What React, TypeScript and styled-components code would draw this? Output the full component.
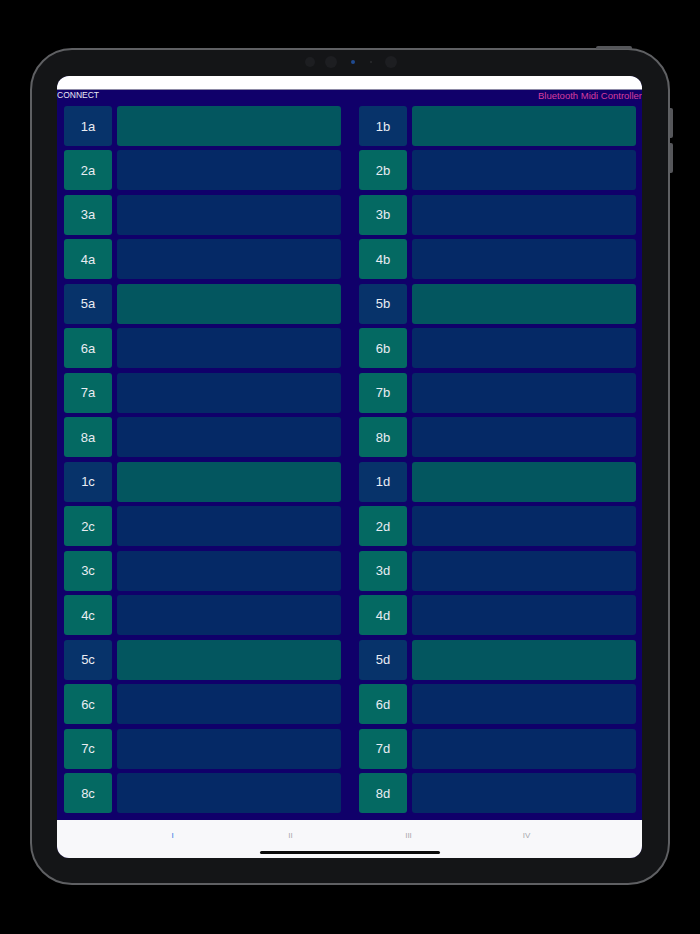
import styled, { createGlobalStyle } from "styled-components";

// pad rows: 1a..8a / 1b..8b, then 1c..8c / 1d..8d
const GROUPS = [
  ["a", "b"],
  ["c", "d"],
];
const TABS = ["I", "II", "III", "IV"];

const GlobalStyle = createGlobalStyle`
  html, body {
    margin: 0;
    padding: 0;
    background: #000;
  }
  body {
    font-family: "Liberation Sans", Arial, sans-serif;
  }
`;

const Page = styled.div`
  width: 700px;
  height: 934px;
  padding: 48px 0 0 30px;
  box-sizing: border-box;
  background: #000;
`;

const Device = styled.div`
  position: relative;
  width: 640px;
  height: 837px;
  box-sizing: border-box;
  padding: 26px 26px 25px 25px;
  border: 2px solid #5f6063;
  border-radius: 42px;
  background: #141517;
`;

const TopButton = styled.div`
  position: absolute;
  top: -4px;
  right: 36px;
  width: 36px;
  height: 3px;
  border-radius: 2px 2px 0 0;
  background: #55565a;
`;

const SideButton = styled.div<{ $top: number; $h: number }>`
  position: absolute;
  right: -5px;
  top: ${({ $top }) => $top}px;
  width: 3px;
  height: ${({ $h }) => $h}px;
  border-radius: 0 2px 2px 0;
  background: #55565a;
`;

const Cameras = styled.div`
  position: absolute;
  top: 6px;
  left: 273px;
  display: flex;
  align-items: center;
  height: 12px;
`;

const Lens = styled.div<{ $size: number; $gap: number; $color?: string }>`
  width: ${({ $size }) => $size}px;
  height: ${({ $size }) => $size}px;
  margin-left: ${({ $gap }) => $gap}px;
  border-radius: 50%;
  background: ${({ $color }) => $color || "#1d1e21"};
`;

const Screen = styled.div`
  width: 100%;
  height: 100%;
  display: flex;
  flex-direction: column;
  border-radius: 12px;
  overflow: hidden;
  background: #10006a;
`;

const StatusBar = styled.div`
  height: 13px;
  background: #fff;
  border-bottom: 1px solid #8d8aa6;
  flex-shrink: 0;
`;

const Main = styled.div`
  flex: 1;
  display: flex;
  flex-direction: column;
  background: #10006a;
`;

const Header = styled.div`
  display: flex;
  justify-content: space-between;
  align-items: center;
  height: 11px;
  margin-bottom: 5px;
  font-size: 8.5px;
  line-height: 11px;
`;

const Connect = styled.span`
  color: #e8e8f4;
`;

const AppTitle = styled.span`
  color: #d63d9f;
  font-size: 9.5px;
`;

const Grid = styled.div`
  display: grid;
  grid-template-columns: 1fr 1fr;
  grid-auto-rows: 40px;
  column-gap: 18px;
  row-gap: 4.47px;
  padding: 0 6px 0 7px;
`;

const Pad = styled.div`
  display: flex;
  gap: 5px;
`;

const Label = styled.div<{ $first: boolean }>`
  width: 48px;
  flex-shrink: 0;
  display: flex;
  align-items: center;
  justify-content: center;
  border-radius: 3px;
  background: ${({ $first }) => ($first ? "#07336a" : "#046962")};
  color: #e9ecf2;
  font-size: 13px;
`;

const Bar = styled.div<{ $first: boolean }>`
  flex: 1;
  border-radius: 3px;
  background: ${({ $first }) => ($first ? "#03565f" : "#052966")};
`;

const TabBar = styled.div`
  position: relative;
  height: 38px;
  flex-shrink: 0;
  display: flex;
  justify-content: center;
  background: #f8f8fa;
`;

const Tab = styled.div<{ $active: boolean }>`
  width: 118px;
  padding-top: 11px;
  text-align: center;
  font-size: 8px;
  line-height: 10px;
  color: ${({ $active }) => ($active ? "#2d7fe6" : "#a9a9ae")};
`;

const HomeIndicator = styled.div`
  position: absolute;
  left: 203px;
  bottom: 4px;
  width: 180px;
  height: 3.5px;
  border-radius: 2px;
  background: #0a0a0a;
`;

function App() {
  const rows: { num: number; side: string[] }[] = [];
  GROUPS.forEach((pair) => {
    for (let n = 1; n <= 8; n++) rows.push({ num: n, side: pair });
  });

  return (
    <>
      <GlobalStyle />
      <Page>
        <Device>
          <TopButton />
          <SideButton $top={58} $h={30} />
          <SideButton $top={93} $h={30} />
          <Cameras>
            <Lens $size={10} $gap={0} />
            <Lens $size={12} $gap={10} />
            <Lens $size={4} $gap={14} $color="#1f4a8f" />
            <Lens $size={2} $gap={15} $color="#2a2b2e" />
            <Lens $size={12} $gap={13} />
          </Cameras>
          <Screen>
            <StatusBar />
            <Main>
              <Header>
                <Connect>CONNECT</Connect>
                <AppTitle>Bluetooth Midi Controller</AppTitle>
              </Header>
              <Grid>
                {rows.map((r) =>
                  r.side.map((s) => {
                    const first = r.num === 1 || r.num === 5;
                    return (
                      <Pad key={`${r.num}${s}`}>
                        <Label $first={first}>
                          {r.num}
                          {s}
                        </Label>
                        <Bar $first={first} />
                      </Pad>
                    );
                  })
                )}
              </Grid>
            </Main>
            <TabBar>
              {TABS.map((t, i) => (
                <Tab key={t} $active={i === 0}>
                  {t}
                </Tab>
              ))}
              <HomeIndicator />
            </TabBar>
          </Screen>
        </Device>
      </Page>
    </>
  );
}

export default App;
